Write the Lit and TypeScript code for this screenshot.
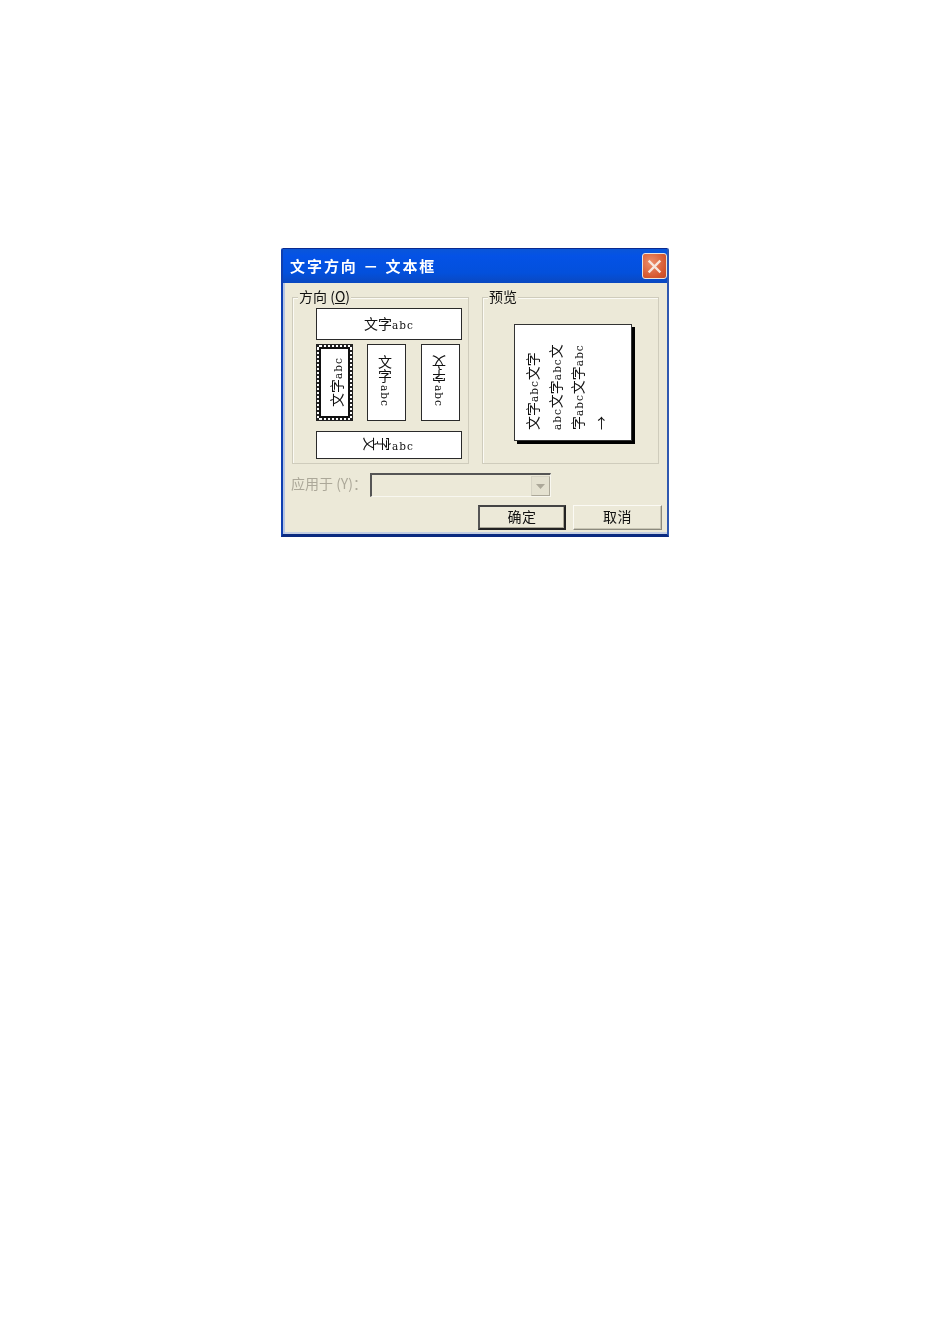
import { LitElement, html, css } from "lit";
import { customElement } from "lit/decorators.js";

@customElement("app-root")
export class AppRoot extends LitElement {
  static styles = css`
    :host { display: block; width: 950px; height: 1344px; background: #fff; padding: 248px 0 0 281px; box-sizing: border-box; font-family: "Noto Sans CJK SC", "Liberation Sans", sans-serif; color: #111; }
    .dialog { width: 388px; height: 289px; box-sizing: border-box; background: #ece9d8; border: 1px solid #0a2a8f; border-left: 2px solid #0f3fb0; border-right: 2px solid #2f58b0; border-bottom: 3px solid #0a2a80; border-radius: 2px 2px 0 0; display: flex; flex-direction: column; filter: blur(0.35px); }
    .title { height: 34px; flex: none; background: linear-gradient(180deg, #0a56d8 0%, #0452e6 20%, #0350dc 70%, #0a48c0 100%); display: flex; align-items: center; justify-content: space-between; padding: 0 0 2px 7px; box-sizing: border-box; color: #fff; font-size: 15px; font-weight: 700; letter-spacing: 1.95px; }
    .close { width: 25px; height: 26px; box-sizing: border-box; margin-top: 2px; border: 1px solid #e8e4e0; border-radius: 3px; background: radial-gradient(circle at 35% 35%, #ec8e6c, #d5572f 70%, #c24a28); display: flex; align-items: center; justify-content: center; }
    .body { flex: 1; display: flex; flex-direction: column; padding: 14px 5px 0 9px; box-shadow: inset 2px 0 0 #b4c4e4, inset 0 -2px 0 #c4cfe2; }
    .groups { display: flex; gap: 13px; }
    .group { position: relative; width: 177px; height: 167px; box-sizing: border-box; border: 1px solid #cfccbc; box-shadow: inset 1px 1px 0 #fbfaf4; }
    .group.right { display: flex; align-items: flex-start; justify-content: flex-start; padding: 26px 0 0 31px; }
    .legend { position: absolute; left: 5px; top: -11px; background: #ece9d8; padding: 0 1px; font-size: 14px; line-height: 18px; color: #111; }
    .options { display: flex; flex-direction: column; padding: 10px 0 0 23px; }
    .opt { box-sizing: border-box; background: #fff; border: 1px solid #2a2a2a; display: flex; align-items: center; justify-content: center; font-size: 14px; line-height: 1; color: #111; }
    small { font-family: "DejaVu Serif", serif; font-size: 10.5px; letter-spacing: 1px; line-height: 0; color: #111; }
    .wide { width: 146px; height: 32px; padding-bottom: 3px; }
    .wide.bottom { height: 28px; }
    .row { display: flex; margin: 4px 0 10px; }
    .tall { width: 39px; height: 77px; padding: 0 3px 3px 0; }
    .tall.sel { width: 37px; position: relative; padding: 0 0 2px 2px; border: 1px solid #222; }
    .tall.sel::before { content: ""; position: absolute; inset: 0; border: 2px dotted #222; }
    .tall.sel::after { content: ""; position: absolute; inset: 2px; border: 2px solid #111; }
    .tall.b { margin-left: 14px; }
    .tall.c { margin-left: 15px; }
    .rot { transform: rotate(-90deg); white-space: nowrap; }
    .vert { writing-mode: vertical-rl; white-space: nowrap; }
    .vert small { margin-top: 2px; }
    .stack { display: flex; flex-direction: column; align-items: center; }
    .stack small { writing-mode: vertical-rl; line-height: 14px; margin-top: 2px; }
    .flip { display: block; writing-mode: vertical-rl; transform: rotate(180deg); }
    .side { display: inline-block; transform: rotate(90deg); }
    .paper { width: 118px; height: 117px; box-sizing: border-box; background: #fff; border: 1px solid #333; box-shadow: 3px 3px 0 #000; display: flex; justify-content: flex-start; padding: 13px 0 9px 6px; }
    .ptext { writing-mode: vertical-rl; text-orientation: sideways; transform: rotate(180deg); height: 92px; font-size: 14px; line-height: 22.5px; white-space: nowrap; color: #111; }
    .apply { display: flex; align-items: flex-start; height: 24px; margin-top: 9px; }
    .apply label { width: 79px; margin-left: -1px; font-size: 14px; line-height: 20px; color: #aca899; white-space: nowrap; }
    .combo { width: 181px; height: 24px; box-sizing: border-box; border: 1px solid #f8f7f0; border-top: 2px solid #555; border-left: 2px solid #555; display: flex; justify-content: flex-end; padding: 1px 0 0; }
    .drop { width: 19px; height: 20px; box-sizing: border-box; border: 1px solid #d6d3c4; border-right-color: #aca899; border-bottom-color: #aca899; background: #e4e1d0; display: flex; align-items: center; justify-content: center; }
    .btns { display: flex; justify-content: flex-end; gap: 7px; margin-top: 8px; }
    .btn { width: 89px; height: 25px; padding-bottom: 3px; box-sizing: border-box; background: #ece9d8; border: 1px solid #fbfaf4; border-right-color: #8c8a7e; border-bottom-color: #8c8a7e; display: flex; align-items: center; justify-content: center; font-size: 14px; color: #111; letter-spacing: 0.5px; box-shadow: inset -1px -1px 0 #c8c5b4; }
    .btn.def { width: 88px; border: 2px solid #222; border-top-color: #444; border-left-color: #555; box-shadow: inset -1px -1px 0 #a9a696; }
  `;
  render() {
    return html`
      <div class="dialog">
        <div class="title">
          <span>文字方向 － 文本框</span>
          <div class="close">
            <svg width="15" height="15" viewBox="0 0 15 15"><path d="M2.5 2.5 12.5 12.5M12.5 2.5 2.5 12.5" stroke="#f6e6de" stroke-width="2.4" stroke-linecap="square"/></svg>
          </div>
        </div>
        <div class="body">
          <div class="groups">
            <div class="group">
              <div class="legend">方向 (<u>O</u>)</div>
              <div class="options">
                <div class="opt wide"><span>文字<small>abc</small></span></div>
                <div class="row">
                  <div class="opt tall sel"><span class="rot">文字<small>abc</small></span></div>
                  <div class="opt tall b"><span class="vert">文字<small>abc</small></span></div>
                  <div class="opt tall c"><span class="stack"><span class="flip">文</span><span class="flip">字</span><small>abc</small></span></div>
                </div>
                <div class="opt wide bottom"><span><span class="side">文</span><span class="side">字</span><small>abc</small></span></div>
              </div>
            </div>
            <div class="group right">
              <div class="legend">预览</div>
              <div class="paper">
                <div class="ptext">文字<small>abc</small>文字<br /><small>abc</small>文字<small>abc</small>文<br />字<small>abc</small>文字<small>abc</small><br />→</div>
              </div>
            </div>
          </div>
          <div class="apply">
            <label>应用于 (Y)：</label>
            <div class="combo">
              <div class="drop">
                <svg width="9" height="5" viewBox="0 0 9 5"><path d="M0 0H9L4.5 5Z" fill="#aca899"/></svg>
              </div>
            </div>
          </div>
          <div class="btns">
            <div class="btn def">确定</div>
            <div class="btn">取消</div>
          </div>
        </div>
      </div>
    `;
  }
}
